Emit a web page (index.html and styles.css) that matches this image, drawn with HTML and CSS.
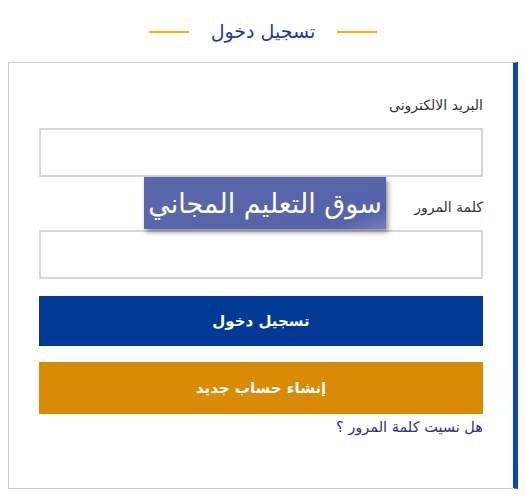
FILE: index.html
```html
<!DOCTYPE html>
<html lang="ar" dir="rtl">
<head>
<meta charset="utf-8">
<link rel="stylesheet" href="styles.css">
</head>
<body>
<header class="head">
  <span class="line"></span>
  <h1 class="title">تسجيل دخول</h1>
  <span class="line"></span>
</header>
<main class="card">
  <label class="label">البريد الالكترونى</label>
  <input class="field" type="text">
  <label class="label label-2">كلمة المرور</label>
  <input class="field" type="password">
  <button class="btn btn-login">تسجيل دخول</button>
  <button class="btn btn-new">إنشاء حساب جديد</button>
  <a class="forgot" href="#">هل نسيت كلمة المرور ؟</a>
</main>
<div class="mark">سوق التعليم المجاني</div>
</body>
</html>
```
FILE: styles.css
```css
html, body { margin: 0; padding: 0; background: #fff; }
body {
  font-family: "DejaVu Sans", "Noto Sans", sans-serif;
  direction: rtl;
  position: relative;
  width: 526px;
  height: 502px;
  overflow: hidden;
}
.head {
  height: 62px;
  display: flex;
  align-items: center;
  justify-content: center;
  gap: 22px;
}
.line {
  width: 40px;
  height: 2px;
  background: #f0b400;
  margin-top: 2px;
}
.title {
  margin: 0;
  font-size: 19px;
  font-weight: normal;
  color: #1a3da3;
}
.card {
  margin: 0 8px;
  height: 427px;
  box-sizing: border-box;
  border: 1px solid #cccccc;
  border-right: 5px solid #0b48b4;
  padding: 32px 30px 0 30px;
  display: flex;
  flex-direction: column;
}
.label {
  font-size: 14px;
  color: #333;
  height: 20px;
  line-height: 20px;
  margin-bottom: 13px;
}
.label-2 { margin-top: 20px; margin-bottom: 13px; }
.field {
  height: 49px;
  box-sizing: border-box;
  border: 2px solid #d3d6db;
  background: #fff;
  margin: 0;
  outline: none;
}
.btn {
  height: 50px;
  border: none;
  color: #fff;
  font-family: inherit;
  font-size: 15px;
  font-weight: bold;
  margin: 0;
}
.btn-login { background: #003a95; margin-top: 17px; }
.btn-new { background: #d98b06; margin-top: 16px; height: 52px; }
.forgot {
  margin-top: 5px;
  font-size: 14.5px;
  color: #2b2f86;
  text-decoration: none;
}
.mark {
  position: absolute;
  left: 144px;
  top: 177px;
  width: 242px;
  height: 52px;
  background: linear-gradient(160deg, #5a67ab 0%, #5663a8 85%, #7480bb 100%);
  box-shadow: 2px 3px 5px rgba(0,0,0,0.45);
  color: #fff;
  font-size: 27px;
  display: flex;
  align-items: center;
  justify-content: center;
  direction: rtl;
}
```
